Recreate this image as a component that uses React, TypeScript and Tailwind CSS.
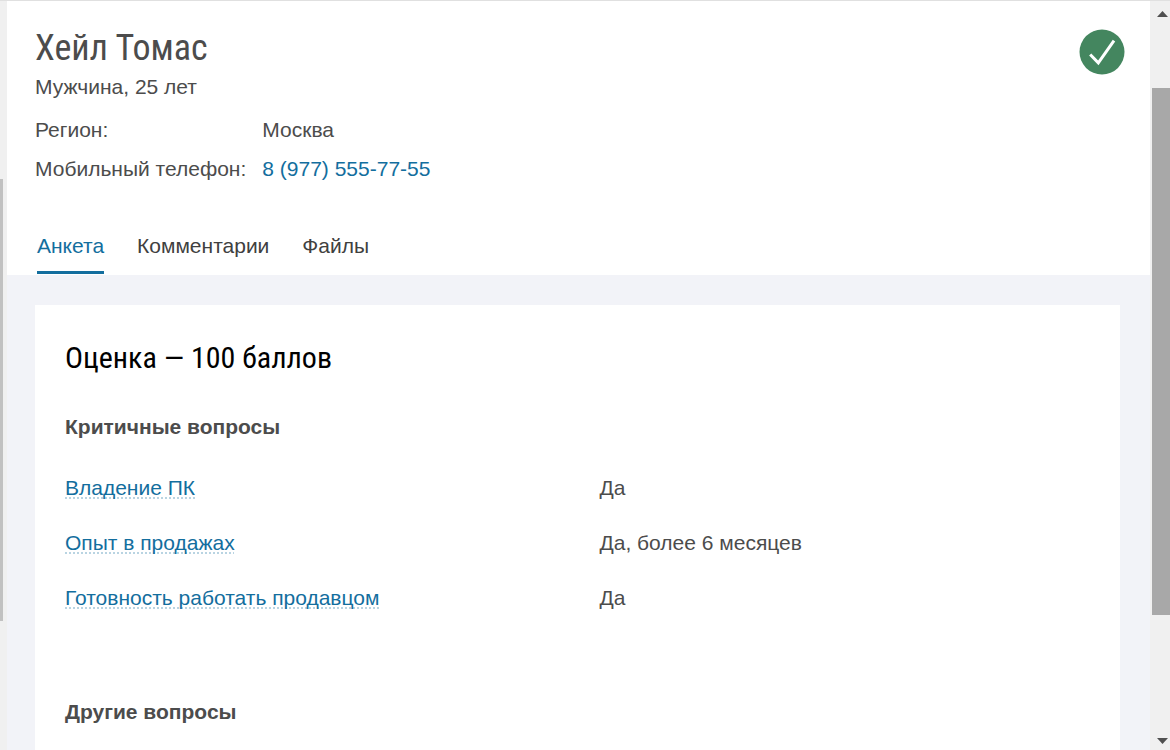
const tabs = ['Анкета', 'Комментарии', 'Файлы']

const criticalQuestions = [
  { question: 'Владение ПК', answer: 'Да' },
  { question: 'Опыт в продажах', answer: 'Да, более 6 месяцев' },
  { question: 'Готовность работать продавцом', answer: 'Да' }
]

function ListScrollbar() {
  return (
    <div className="w-[7px] shrink-0 bg-[#f0f0f0] flex flex-col">
      <div className="grow-[178]"></div>
      <div className="grow-[442] w-[3px] bg-[#c1c1c1]"></div>
      <div className="grow-[129]"></div>
    </div>
  )
}

function PageScrollbar() {
  return (
    <div className="w-5 shrink-0 bg-[#f0f0f0] flex flex-col items-end pt-[10px] pb-[6px]">
      <svg className="w-[11px] h-[6px] mr-[2px]" viewBox="0 0 11 6" fill="#505050">
        <path d="M0 6L5.5 0L11 6Z" />
      </svg>
      <div className="grow-[71]"></div>
      <div className="grow-[527] w-[18px] bg-[#a8a8a8]"></div>
      <div className="grow-[123]"></div>
      <svg className="w-[11px] h-[6px] mr-[2px]" viewBox="0 0 11 6" fill="#505050">
        <path d="M0 0H11L5.5 6Z" />
      </svg>
    </div>
  )
}

export default function App() {
  return (
    <div className="h-screen overflow-hidden flex border-t border-[#e0e0e0] bg-[#f2f3f8] font-['Liberation_Sans',Arial,sans-serif] text-[21px] leading-[25px] text-[#4c4c4c]">
      <ListScrollbar />

      <main className="grow min-w-0">
        <header className="bg-white pl-7 pr-[25px] pt-7">
          <div className="flex justify-between items-start">
            <div>
              <h1 className="font-['Roboto_Condensed','Liberation_Sans_Narrow',Roboto,sans-serif] text-[36px] leading-[38px]">
                Хейл Томас
              </h1>
              <p className="mt-[7px]">Мужчина, 25 лет</p>
            </div>
            <svg className="w-[46px] h-[46px]" viewBox="0 0 46 46" role="img" aria-label="Подходит">
              <circle cx="23" cy="23" r="22.5" fill="#44865f" />
              <path d="M11.2 25.5L19.3 33.8L35 11.6" fill="none" stroke="#fff" strokeWidth="3" />
            </svg>
          </div>

          <dl className="mt-[18px] grid grid-cols-[auto_1fr] gap-x-4 gap-y-[14px]">
            <dt>Регион:</dt>
            <dd>Москва</dd>
            <dt>Мобильный телефон:</dt>
            <dd>
              <a href="tel:+79775557755" className="text-[#136e9e]">8 (977) 555-77-55</a>
            </dd>
          </dl>

          <nav className="mt-[52px] ml-[2px] pb-px flex gap-[33px]">
            {tabs.map((tab, index) => (
              <button
                key={tab}
                type="button"
                className={
                  index === 0
                    ? 'pb-[13px] border-b-[3px] border-[#136e9e] text-[#136e9e]'
                    : 'pb-[13px] border-b-[3px] border-transparent text-[#404040]'
                }
              >
                {tab}
              </button>
            ))}
          </nav>
        </header>

        <section className="mt-[30px] ml-7 mr-[30px] bg-white px-[30px] pt-[33px] pb-[100px]">
          <h2 className="font-['Roboto_Condensed','Liberation_Sans_Narrow',Roboto,sans-serif] text-[30px] leading-10 text-black">
            Оценка — 100 баллов
          </h2>

          <h3 className="mt-9 font-bold">Критичные вопросы</h3>
          <dl className="mt-9 grid gap-y-[30px]">
            {criticalQuestions.map((item) => (
              <div key={item.question} className="grid grid-cols-2 gap-x-11">
                <dt>
                  <a
                    href="#"
                    className="text-[#136e9e] underline decoration-dotted decoration-2 decoration-[#b9d4e2] underline-offset-2 [text-decoration-skip-ink:none]"
                  >
                    {item.question}
                  </a>
                </dt>
                <dd>{item.answer}</dd>
              </div>
            ))}
          </dl>

          <h3 className="mt-[89px] font-bold">Другие вопросы</h3>
        </section>
      </main>

      <PageScrollbar />
    </div>
  )
}
